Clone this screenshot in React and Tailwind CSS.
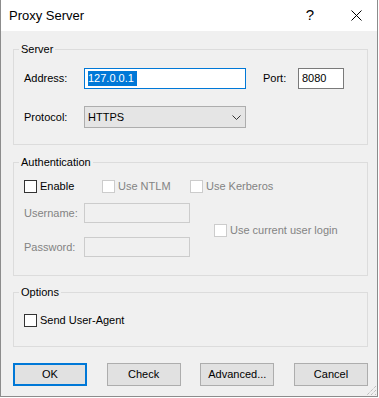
import React from 'react';

function Check({ label, disabled, className = '' }) {
    return (
        <div className={`flex items-center h-[13px] leading-[13px] ${className}`}>
            <span
                className={`w-[13px] h-[13px] border shrink-0 bg-white ${disabled ? 'border-[#cccccc]' : 'border-[#333333]'}`}
            />
            <span className={`ml-[3px] ${disabled ? 'text-[#838383]' : 'text-black'}`}>{label}</span>
        </div>
    );
}

function Group({ title, children, className = '' }) {
    return (
        <fieldset className={`w-[355px] min-w-0 border border-[#dcdcdc] ${className}`}>
            <legend className="ml-[5px] px-[2px] leading-[17px]">{title}</legend>
            {children}
        </fieldset>
    );
}

function Button({ children, primary }) {
    return (
        <button
            className={`w-[74px] h-[23px] bg-[#e1e1e1] flex items-center justify-center ${primary ? 'border-2 border-[#0078d7]' : 'border border-[#adadad]'}`}
        >
            {children}
        </button>
    );
}

export default function App() {
    return (
        <div className="w-[379px] h-[398px] bg-white text-[11px] text-black font-['Liberation_Sans',Arial,sans-serif]">
            <div className="relative w-[378px] h-[397px] flex flex-col bg-[#f0f0f0] border-l border-r border-b border-[#8c8c8c]">
                {/* title bar */}
                <div className="h-[31px] shrink-0 bg-white flex items-center">
                    <span className="pl-[8px] text-[13px]">Proxy Server</span>
                    <span className="ml-auto w-[50px] flex justify-center text-[15px]">?</span>
                    <span className="w-[42px] flex justify-center">
                        <svg width="11" height="11" viewBox="0 0 11 11">
                            <path d="M0.5 0.5 L10.5 10.5 M10.5 0.5 L0.5 10.5" stroke="#000" strokeWidth="1" />
                        </svg>
                    </span>
                </div>

                <div className="pl-[12px] pt-[10px]">
                    <Group title="Server">
                        <div className="pl-[10px] pt-[10px] pb-[16px]">
                            <div className="flex items-center h-[21px]">
                                <span className="w-[60px]">Address:</span>
                                <div className="w-[162px] h-[21px] bg-white border border-[#0078d7] pl-[3px] flex items-center">
                                    <span className="bg-[#0078d7] text-white leading-[15px] pr-[3px]">127.0.0.1</span>
                                </div>
                                <span className="ml-[17px] w-[35px]">Port:</span>
                                <div className="w-[46px] h-[21px] bg-white border border-[#7a7a7a] pl-[3px] flex items-center">
                                    8080
                                </div>
                            </div>
                            <div className="flex items-center mt-[17px]">
                                <span className="w-[60px]">Protocol:</span>
                                <div className="w-[162px] h-[22px] bg-[#e5e5e5] border border-[#adadad] pl-[3px] pr-[4px] flex items-center justify-between">
                                    <span>HTTPS</span>
                                    <svg width="9" height="5" viewBox="0 0 9 5">
                                        <path d="M0.5 0.5 L4.5 4.5 L8.5 0.5" fill="none" stroke="#333" strokeWidth="1" />
                                    </svg>
                                </div>
                            </div>
                        </div>
                    </Group>

                    <Group title="Authentication" className="mt-[9px]">
                        <div className="pl-[10px] pt-[9px] pb-[18px]">
                            <div className="flex h-[13px]">
                                <Check label="Enable" className="w-[78px]" />
                                <Check label="Use NTLM" disabled className="w-[88px]" />
                                <Check label="Use Kerberos" disabled />
                            </div>
                            <div className="flex items-center mt-[10px]">
                                <div className="flex flex-col gap-[14px] text-[#838383]">
                                    <div className="flex items-center">
                                        <span className="w-[60px]">Username:</span>
                                        <div className="w-[106px] h-[20px] border border-[#cccccc] bg-[#f0f0f0]" />
                                    </div>
                                    <div className="flex items-center">
                                        <span className="w-[60px]">Password:</span>
                                        <div className="w-[106px] h-[20px] border border-[#cccccc] bg-[#f0f0f0]" />
                                    </div>
                                </div>
                                <Check label="Use current user login" disabled className="ml-[24px]" />
                            </div>
                        </div>
                    </Group>

                    <Group title="Options" className="mt-[8px]">
                        <div className="pl-[10px] pt-[13px] pb-[19px]">
                            <Check label="Send User-Agent" />
                        </div>
                    </Group>

                    <div className="mt-[16px] w-[355px] flex justify-between">
                        <Button primary>OK</Button>
                        <Button>Check</Button>
                        <Button>Advanced...</Button>
                        <Button>Cancel</Button>
                    </div>
                </div>

                {/* resize grip */}
                <svg className="absolute right-0 bottom-0" width="12" height="12" viewBox="0 0 12 12">
                    <path d="M11 2 L2 11 M11 6 L6 11 M11 10 L10 11" stroke="#a8a8a8" strokeWidth="1" strokeDasharray="1 1" />
                </svg>
            </div>
        </div>
    );
}
